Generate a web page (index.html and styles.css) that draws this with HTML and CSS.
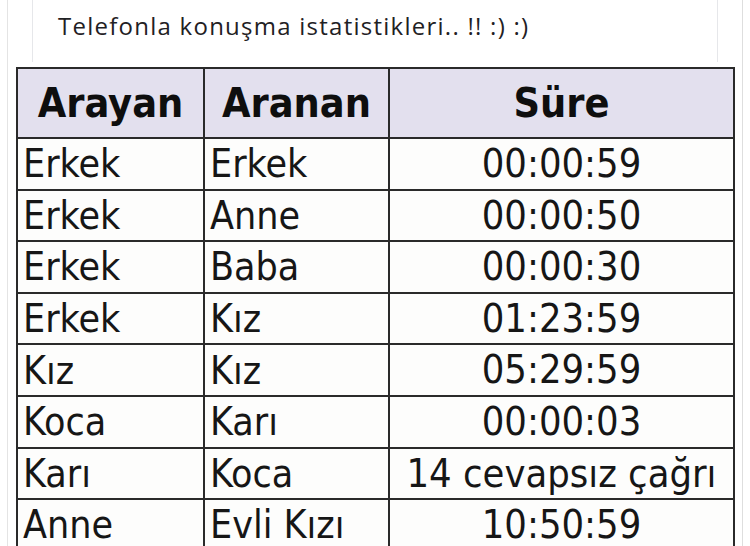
FILE: index.html
```html
<!DOCTYPE html>
<html lang="tr">
<head>
<meta charset="utf-8">
<title>Telefonla konuşma istatistikleri</title>
<link rel="stylesheet" href="styles.css">
</head>
<body>
<div class="page">
  <div class="card">
    <p class="caption">Telefonla konuşma istatistikleri.. !! :) :)</p>
  </div>
  <table class="stats">
    <colgroup>
      <col class="c1"><col class="c2"><col class="c3">
    </colgroup>
    <thead>
      <tr><th>Arayan</th><th>Aranan</th><th>Süre</th></tr>
    </thead>
    <tbody>
      <tr><td>Erkek</td><td>Erkek</td><td class="dur">00:00:59</td></tr>
      <tr><td>Erkek</td><td>Anne</td><td class="dur">00:00:50</td></tr>
      <tr><td>Erkek</td><td>Baba</td><td class="dur">00:00:30</td></tr>
      <tr><td>Erkek</td><td>Kız</td><td class="dur">01:23:59</td></tr>
      <tr><td>Kız</td><td>Kız</td><td class="dur">05:29:59</td></tr>
      <tr><td>Koca</td><td>Karı</td><td class="dur">00:00:03</td></tr>
      <tr><td>Karı</td><td>Koca</td><td class="dur">14 cevapsız çağrı</td></tr>
      <tr><td>Anne</td><td>Evli Kızı</td><td class="dur">10:50:59</td></tr>
    </tbody>
  </table>
</div>
</body>
</html>
```

FILE: styles.css
```css
html, body {
  margin: 0;
  padding: 0;
  background: #ffffff;
}
body {
  width: 750px;
  height: 546px;
  overflow: hidden;
}
.page {
  margin-left: 7px;
  width: 734px;
  height: 546px;
  border-left: 1px solid #e4e4e4;
  border-right: 1px solid #dedede;
}
.card {
  margin: 0 24px 0 24px;
  height: 62px;
  border-left: 1px solid #e6e7ea;
  border-right: 1px solid #e6e7ea;
  display: flex;
  align-items: center;
}
.caption {
  margin: 0 0 11px 25px;
  font-family: "Open Sans", "Liberation Sans", Arial, sans-serif;
  font-size: 24px;
  letter-spacing: 1.25px;
  color: #1f2124;
}
.stats {
  margin: 5px 0 0 8px;
  width: 717px;
  border-collapse: collapse;
  table-layout: fixed;
  font-family: "DejaVu Sans Condensed", "DejaVu Sans", sans-serif;
  font-stretch: semi-condensed;
  color: #161616;
}
.c1 { width: 187px; }
.c2 { width: 185px; }
.c3 { width: 345px; }
.stats th, .stats td {
  border: 2px solid #2a2a2a;
  padding: 0 5px;
  line-height: 1;
  white-space: nowrap;
}
.stats th {
  background: #e3e0ee;
  height: 68px;
  font-weight: bold;
  font-size: 41px;
  text-align: center;
  color: #0e0e0e;
}
.stats td {
  background: #fdfdfc;
  height: 49.6px;
  font-size: 39px;
  text-align: left;
}
.stats td.dur {
  text-align: center;
  font-size: 39.5px;
  padding: 0 2px;
}
```
